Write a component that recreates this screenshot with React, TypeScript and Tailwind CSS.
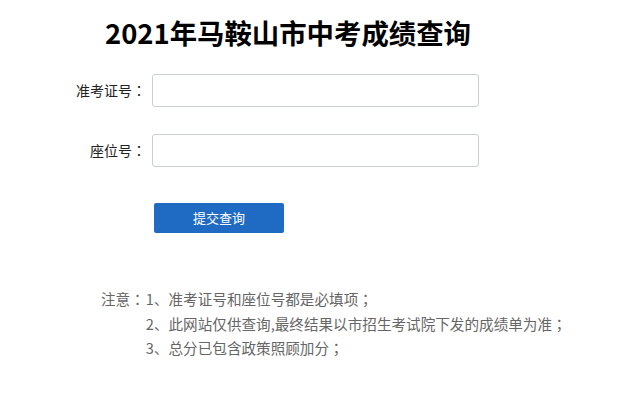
const Punct = ({ c }: { c: string }) => (
  <span style={{ fontFamily: '"Noto Sans CJK TC", sans-serif' }}>{c}</span>
);

export default function App() {
  const notes: [string, string][] = [
    ['1、准考证号和座位号都是必填项', '；'],
    ['2、此网站仅供查询,最终结果以市招生考试院下发的成绩单为准', '；'],
    ['3、总分已包含政策照顾加分', '；'],
  ];

  return (
    <div
      className="min-h-screen bg-white"
      style={{ fontFamily: '"Noto Sans CJK SC", "Noto Sans", sans-serif' }}
    >
      <h1 className="pl-[105px] pt-[17px] text-[27.4px] font-bold leading-[30px] text-black">
        2021年马鞍山市中考成绩查询
      </h1>

      <form className="mt-[27px] flex flex-col" onSubmit={(e) => e.preventDefault()}>
        <div className="flex items-center gap-[6px]">
          <label className="w-[146px] text-right text-[14px] text-[#222]">
            准考证号<Punct c="：" />
          </label>
          <input
            type="text"
            className="h-[33px] w-[327px] rounded-[3px] border border-[#c9ced6] px-2 text-[14px] outline-none"
          />
        </div>
        <div className="mt-[27px] flex items-center gap-[6px]">
          <label className="w-[146px] text-right text-[14px] text-[#222]">
            座位号<Punct c="：" />
          </label>
          <input
            type="text"
            className="h-[33px] w-[327px] rounded-[3px] border border-[#c9ced6] px-2 text-[14px] outline-none"
          />
        </div>
        <div className="mt-[36px] pl-[154px]">
          <button
            type="submit"
            className="h-[30px] w-[130px] rounded-[2px] bg-[#1f6bc4] text-[13px] text-white"
          >
            提交查询
          </button>
        </div>
      </form>

      <div className="mt-[54px] flex pl-[101px] text-[14.6px] leading-[24.5px] text-[#666]">
        <span className="shrink-0 pr-[1px]">
          注意<Punct c="：" />
        </span>
        <ul className="flex flex-col">
          {notes.map(([t, p]) => (
            <li key={t} className="whitespace-nowrap">
              {t}
              <Punct c={p} />
            </li>
          ))}
        </ul>
      </div>
    </div>
  );
}
